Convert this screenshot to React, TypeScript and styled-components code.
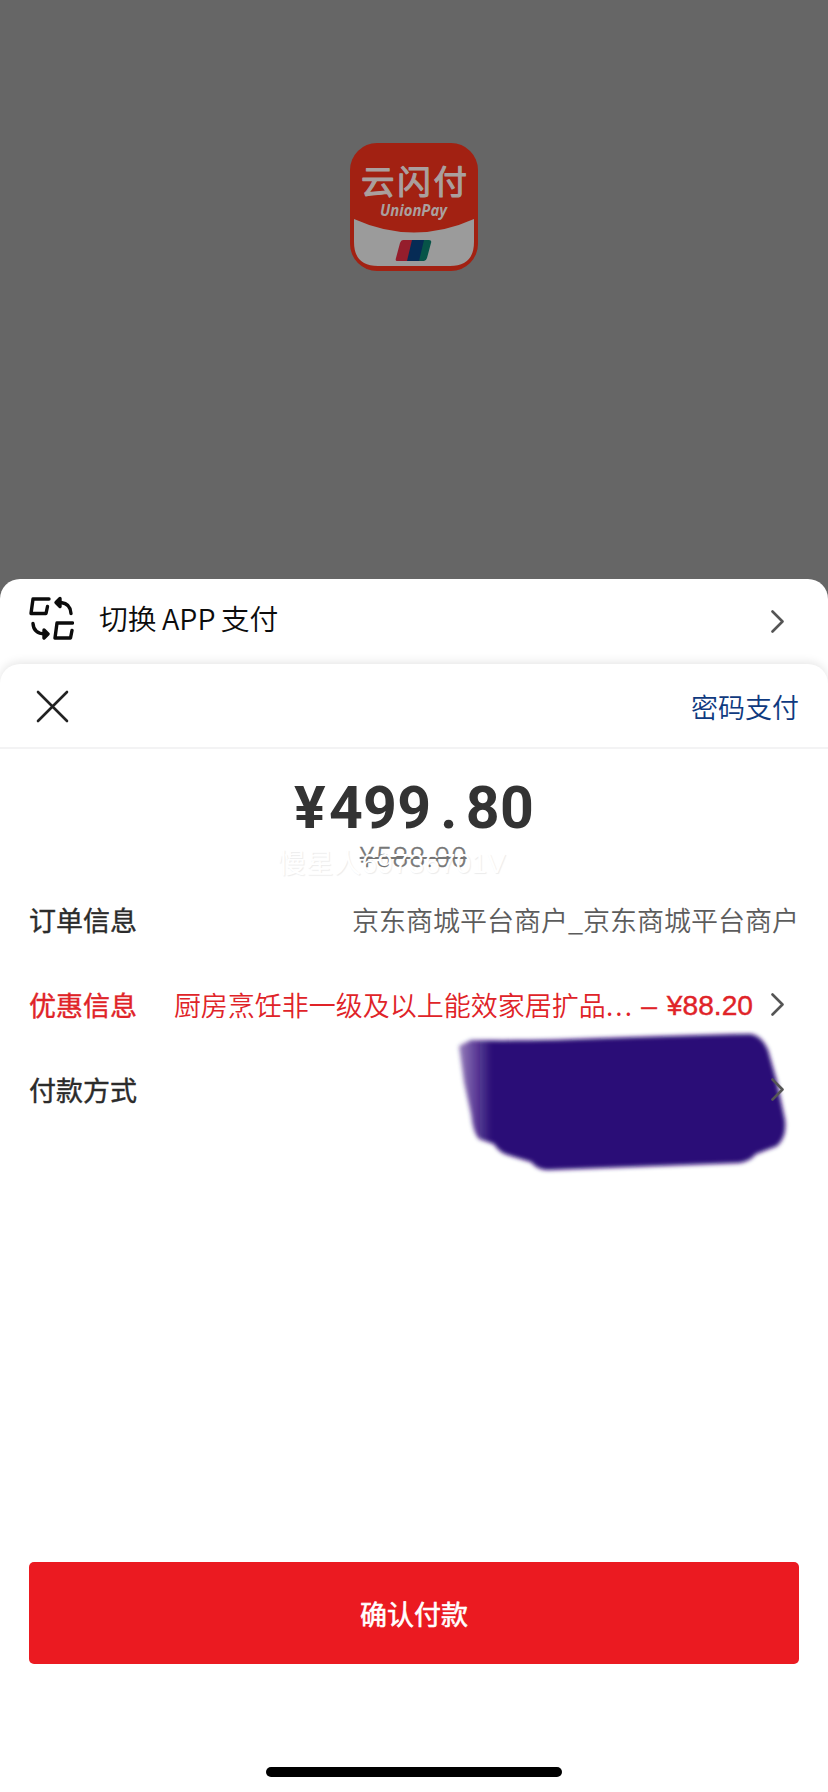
import React from 'react';
import styled, { createGlobalStyle } from 'styled-components';

const Global = createGlobalStyle`
  * { box-sizing: border-box; }
  body { margin: 0; background: #666; font-family: Roboto, "Noto Sans CJK SC", sans-serif; }
`;

const Screen = styled.main`
  width: 828px;
  height: 1792px;
  display: flex;
  flex-direction: column;
  background: #666;
  overflow: hidden;
`;

const Backdrop = styled.section`
  height: 579px;
  flex: none;
  display: flex;
  justify-content: center;
  align-items: flex-start;
  padding-top: 143px;
`;

const SwitchSheet = styled.section`
  flex: 1;
  display: flex;
  flex-direction: column;
  background: #fff;
  border-radius: 20px 20px 0 0;
`;

const SwitchRow = styled.div`
  height: 85px;
  flex: none;
  display: flex;
  align-items: center;
  padding: 0 44px 7px 28px;
`;

const SwitchLabel = styled.span`
  flex: 1;
  margin-left: 25px;
  font: 350 28.8px/40px "Noto Sans CJK SC", sans-serif;
  word-spacing: -1px;
  color: #0c0c0c;
`;

const PaySheet = styled.section`
  flex: 1;
  display: flex;
  flex-direction: column;
  background: #fff;
  border-radius: 20px 20px 0 0;
  box-shadow: 0 -2px 10px rgba(0, 0, 0, 0.1);
`;

const SheetHeader = styled.header`
  height: 85px;
  display: flex;
  align-items: center;
  justify-content: space-between;
  padding: 1px 29px 0 36px;
  border-bottom: 2px solid #f3f3f4;
`;

const PasswordLink = styled.a`
  font: 350 27px/40px "Noto Sans CJK SC", sans-serif;
  color: #0f3a80;
  margin-top: 2px;
`;

const AmountBlock = styled.div`
  height: 130px;
  display: flex;
  flex-direction: column;
  align-items: center;
  position: relative;
`;

const Amount = styled.div`
  margin-top: 24px;
  font: 700 59px/70px Roboto, sans-serif;
  letter-spacing: 0.3px;
  color: #333;
  white-space: nowrap;
`;

const Currency = styled.span`
  padding-right: 3px;
`;

const Point = styled.span`
  padding: 0 8px 0 9px;
`;

const OriginalPrice = styled.div`
  font: 300 28px/30px Roboto, sans-serif;
  letter-spacing: 1.4px;
  color: #777;
  -webkit-text-stroke: 0.4px #777;
  text-decoration: line-through;
  text-decoration-thickness: 2px;
`;

const Watermark = styled.div`
  position: absolute;
  left: 278px;
  top: 97px;
  font: 27.5px/36px "Liberation Sans", "Noto Sans CJK SC", sans-serif;
  letter-spacing: 0.4px;
  color: #fff;
  text-shadow: 1px 1px 1px rgba(0, 0, 0, 0.08);
  white-space: nowrap;
`;

const InfoRow = styled.div<{ $accent?: boolean }>`
  height: 85px;
  display: flex;
  align-items: center;
  justify-content: space-between;
  padding: 0 30px 4px 29px;
  font: 27px/40px "Noto Sans CJK SC", sans-serif;
  color: ${(p) => (p.$accent ? '#e02328' : '#2b2b2b')};
`;

const RowLabel = styled.span`
  -webkit-text-stroke: 0.4px currentColor;
`;

const Merchant = styled.span`
  font-weight: 350;
  color: #5c5c5c;
  margin-right: -1px;
`;

const Discount = styled.span`
  display: flex;
  align-items: center;
  padding-right: 14px;
`;

const DiscountName = styled.span`
  font-weight: 350;
`;

const Ellipsis = styled.span`
  letter-spacing: 2.2px;
`;

const DiscountAmount = styled.span`
  font: 28.2px/40px "Liberation Sans", sans-serif;
  -webkit-text-stroke: 0.4px currentColor;
  margin: 0 18px 0 7px;
  word-spacing: 2px;
  white-space: pre;
`;

const Method = styled.span`
  position: relative;
  display: flex;
  padding-right: 14px;
`;

const Scribble = styled.svg`
  position: absolute;
  right: -1px;
  top: -48px;
`;

const Footer = styled.footer`
  margin-top: auto;
  height: 230px;
  display: flex;
  flex-direction: column;
  align-items: center;
  padding: 0 29px;
`;

const ConfirmButton = styled.button`
  width: 770px;
  height: 102px;
  border: 0;
  border-radius: 5px;
  background: #eb1a21;
  color: #fff;
  font: 27px/40px "Noto Sans CJK SC", sans-serif;
  -webkit-text-stroke: 0.6px #fff;
  padding: 1px 0 0;
`;

const HomeIndicator = styled.div`
  width: 296px;
  height: 10px;
  border-radius: 5px;
  background: #000;
  margin-top: 103px;
`;

const AppLogo = () => (
  <svg width="128" height="128" viewBox="0 0 128 128">
    <rect width="128" height="128" rx="27" fill="#a22112" />
    <path d="M4 76Q64 103 124 76V99Q124 123 100 123H28Q4 123 4 99Z" fill="#9b9b9b" />
    <text x="11" y="51" fontFamily="'Noto Sans CJK SC', sans-serif" fontSize="33.5" fill="#aaa09f" stroke="#aaa09f" strokeWidth="1.1" strokeLinejoin="round" textLength="106">云闪付</text>
    <text x="30" y="73" fontFamily="'Open Sans', sans-serif" fontStyle="italic" fontWeight="700" fontSize="16" textLength="67" lengthAdjust="spacingAndGlyphs" fill="#aaa09f">UnionPay</text>
    <path d="M53 97H63L58 118H47Q45 118 46 115L50 100Q51 97 53 97Z" fill="#951d2c" />
    <path d="M62 97H75L70 118H57Z" fill="#062b55" />
    <path d="M74 97H79Q82 97 81 100L77 115Q76 118 74 118H69Z" fill="#075448" />
  </svg>
);

const SwitchIcon = () => (
  <svg width="46" height="44" viewBox="0 0 46 44" fill="none" stroke="#0c0c0c" strokeWidth="3.400" strokeLinecap="round" strokeLinejoin="round">
    <path d="M21 3H5L3 17.500H18L19.500 10.500" />
    <path d="M44.500 27H29L27 42H42.500L44 34.500" />
    <path d="M30 6.500H33Q42.500 7.500 43 17.500" />
    <path d="M32 2.500L28 6.500L32 10.500Z" fill="#0c0c0c" />
    <path d="M5 27.500Q5.500 37.500 17 38" />
    <path d="M16 34L20 38L16 42Z" fill="#0c0c0c" />
  </svg>
);

const ChevronSvg = styled.svg<{ $drop?: number }>`
  margin-top: ${(p) => p.$drop ?? 0}px;
  position: relative;
`;

const Chevron = ({ drop }: { drop?: number }) => (
  <ChevronSvg $drop={drop} width="13" height="23" viewBox="0 0 13 23" fill="none" stroke="#555" strokeWidth="2.600" strokeLinecap="round" strokeLinejoin="round">
    <path d="M1.500 1.500L11.500 11.500L1.500 21.500" />
  </ChevronSvg>
);

const CloseIcon = () => (
  <svg width="33" height="33" viewBox="0 0 33 33" fill="none" stroke="#222" strokeWidth="2.600" strokeLinecap="round">
    <path d="M2 2L31 31M31 2L2 31" />
  </svg>
);

export default function App() {
  return (
    <Screen>
      <Global />
      <Backdrop><AppLogo /></Backdrop>
      <SwitchSheet>
        <SwitchRow>
          <SwitchIcon />
          <SwitchLabel>切换 APP 支付</SwitchLabel>
          <Chevron drop={6} />
        </SwitchRow>
        <PaySheet>
          <SheetHeader>
            <CloseIcon />
            <PasswordLink>密码支付</PasswordLink>
          </SheetHeader>
          <AmountBlock>
            <Amount><Currency>¥</Currency>499<Point>.</Point>80</Amount>
            <OriginalPrice>¥588.00</OriginalPrice>
            <Watermark>慢星人69736701V</Watermark>
          </AmountBlock>
          <InfoRow>
            <RowLabel>订单信息</RowLabel>
            <Merchant>京东商城平台商户_京东商城平台商户</Merchant>
          </InfoRow>
          <InfoRow $accent>
            <RowLabel>优惠信息</RowLabel>
            <Discount>
              <DiscountName>厨房烹饪非一级及以上能效家居扩品<Ellipsis>...</Ellipsis></DiscountName>
              <DiscountAmount>– ¥88.20</DiscountAmount>
              <Chevron />
            </Discount>
          </InfoRow>
          <InfoRow>
            <RowLabel>付款方式</RowLabel>
            <Method>
              <Scribble width="350" height="150" viewBox="0 0 350 150">
                <defs>
                  <filter id="soft" x="-5%" y="-10%" width="110%" height="120%"><feGaussianBlur stdDeviation="2" /></filter>
                  <linearGradient id="ink" x1="0" x2="1">
                    <stop offset="0" stopColor="#2b0877" stopOpacity="0.5" />
                    <stop offset="0.06" stopColor="#2b0877" stopOpacity="0.8" />
                    <stop offset="0.1" stopColor="#2b0877" />
                  </linearGradient>
                </defs>
                <path d="M10 16L22 10C100 12 180 6 302 4Q313 6 319 20L328 52L336 90Q338 107 328 116L307 124Q300 132 290 133L100 140Q90 141 82 132L62 126Q50 123 45 114L30 109Q24 103 22 84L15 52Z" fill="url(#ink)" filter="url(#soft)" />
              </Scribble>
              <Chevron />
            </Method>
          </InfoRow>
          <Footer>
            <ConfirmButton>确认付款</ConfirmButton>
            <HomeIndicator />
          </Footer>
        </PaySheet>
      </SwitchSheet>
    </Screen>
  );
}
